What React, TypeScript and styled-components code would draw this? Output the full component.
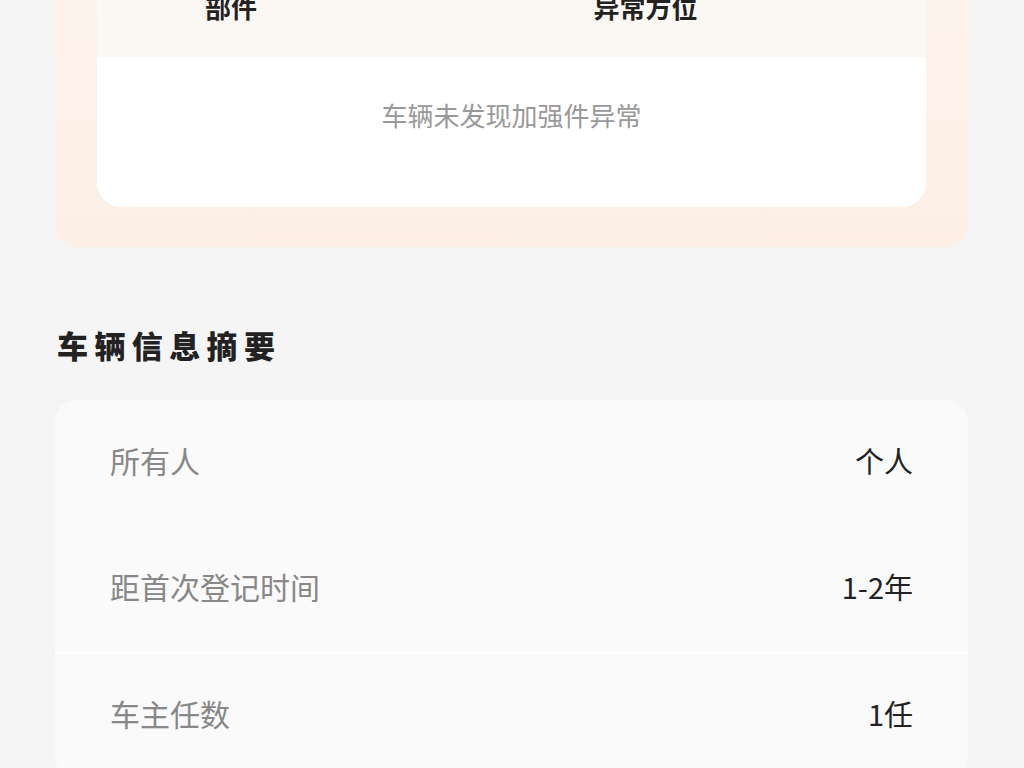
import React from "react";
import styled, { createGlobalStyle } from "styled-components";

const Global = createGlobalStyle`
  html, body { margin: 0; padding: 0; background: #f5f5f5; }
  body { font-family: "Noto Sans CJK SC", "Noto Sans", sans-serif; overflow: hidden; }
`;

const Page = styled.div`
  width: 1024px;
  height: 768px;
  overflow: hidden;
  background: #f5f5f5;
`;

const Content = styled.div`
  margin-top: -43px;
  padding: 0 56px 0 55px;
  display: flex;
  flex-direction: column;
`;

const WarmCard = styled.section`
  background: linear-gradient(180deg, #fef4ed 0%, #fdefe6 100%);
  border-radius: 0 0 22px 22px;
  padding: 0 42px 40px 42px;
`;

const Table = styled.div`
  background: #ffffff;
  border-radius: 0 0 24px 24px;
  overflow: hidden;
`;

const HeadRow = styled.div`
  display: grid;
  grid-template-columns: 268px 1fr;
  height: 100px;
  align-items: center;
  background: #fbf7f2;
`;

const HeadCell = styled.div`
  text-align: center;
  font-size: 26px;
  font-weight: 700;
  color: #222;
  line-height: 30px;
`;

const Empty = styled.div`
  padding: 43px 0 77px;
  text-align: center;
  font-size: 26px;
  line-height: 30px;
  color: #999;
`;

const Title = styled.h2`
  margin: 77px 0 34px 2px;
  font-size: 31px;
  line-height: 42px;
  font-weight: 900;
  letter-spacing: 6.4px;
  color: #222;
`;

const InfoCard = styled.section`
  background: #fafafa;
  border-radius: 22px;
  display: flex;
  flex-direction: column;
`;

const Row = styled.div<{ $divider?: boolean }>`
  height: 126px;
  display: flex;
  align-items: center;
  justify-content: space-between;
  padding: 0 55px 6px;
  border-top: ${(p) => (p.$divider ? "2px solid #fdfdfd" : "none")};
  box-sizing: border-box;
`;

const Label = styled.span`
  font-size: 30px;
  color: #888;
  line-height: 40px;
`;

const Value = styled.span`
  font-size: 29px;
  color: #222;
  line-height: 40px;
`;

const rows = [
  { label: "所有人", value: "个人" },
  { label: "距首次登记时间", value: "1-2年" },
  { label: "车主任数", value: "1任" },
];

export default function App() {
  return (
    <Page>
      <Global />
      <Content>
        <WarmCard>
          <Table>
            <HeadRow>
              <HeadCell>部件</HeadCell>
              <HeadCell>异常方位</HeadCell>
            </HeadRow>
            <Empty>车辆未发现加强件异常</Empty>
          </Table>
        </WarmCard>
        <Title>车辆信息摘要</Title>
        <InfoCard>
          {rows.map((r, i) => (
            <Row key={r.label} $divider={i === 2}>
              <Label>{r.label}</Label>
              <Value>{r.value}</Value>
            </Row>
          ))}
        </InfoCard>
      </Content>
    </Page>
  );
}
